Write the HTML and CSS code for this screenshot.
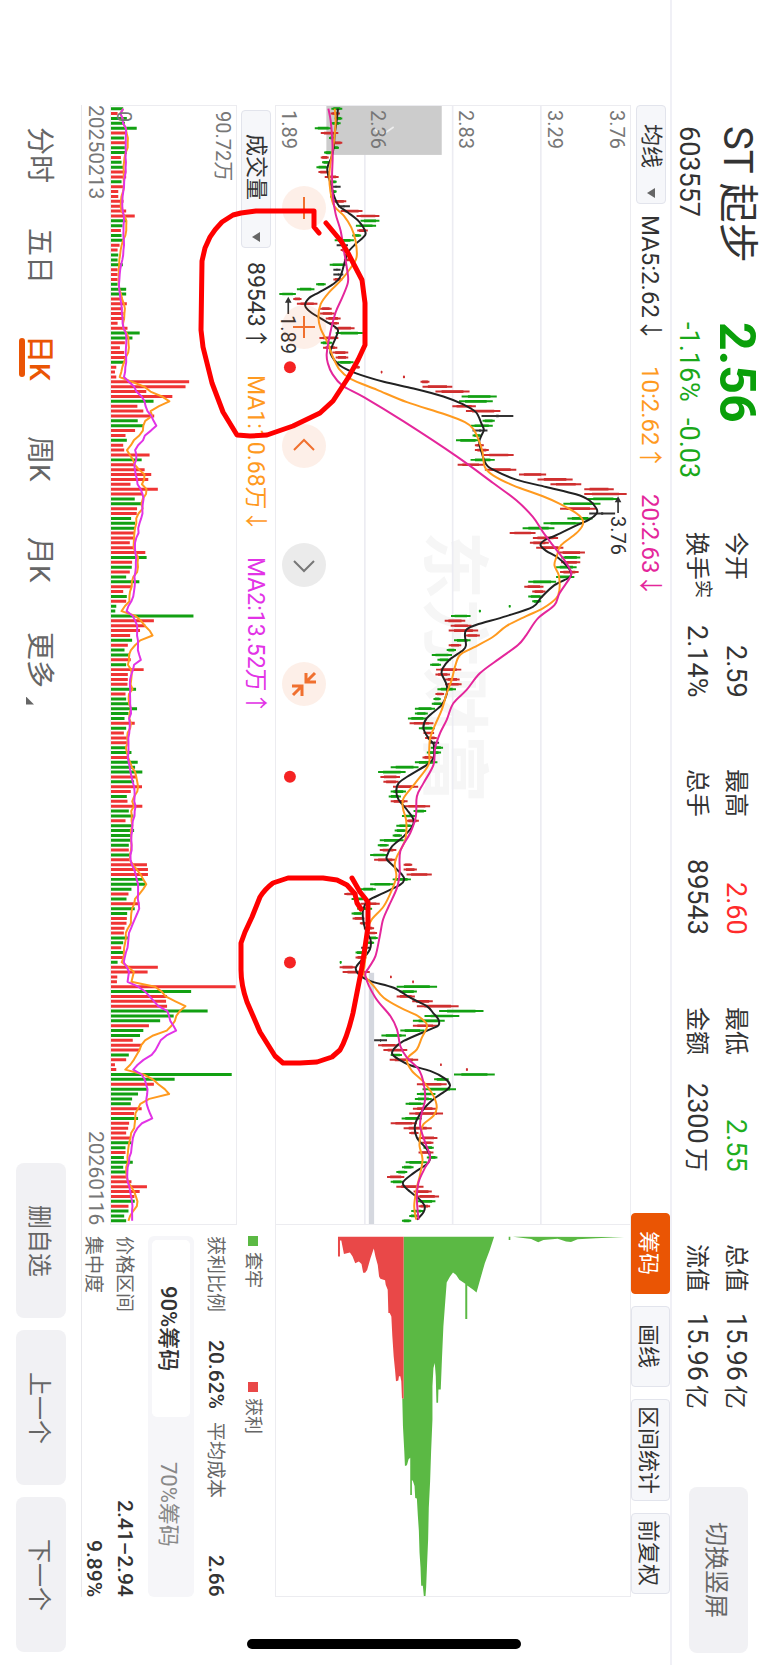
FILE: index.html
```html
<!DOCTYPE html>
<html lang="zh-CN">
<head>
<meta charset="utf-8">
<title>ST 起步 603557</title>
<link rel="stylesheet" href="styles.css">
</head>
<body>
<div class="app">
  <header class="quote">
    <div class="name-block">
      <h1 class="name">ST 起步</h1>
      <p class="code">603557</p>
    </div>
    <div class="price-block">
      <p class="price">2.56</p>
      <p class="change"><span>-1.16%</span><span>-0.03</span></p>
    </div>
    <dl class="stats">
      <div class="stat"><dt>今开</dt><dd>2.59</dd></div>
      <div class="stat"><dt>最高</dt><dd class="up">2.60</dd></div>
      <div class="stat"><dt>最低</dt><dd class="down">2.55</dd></div>
      <div class="stat"><dt>总值</dt><dd>15.96<span class="unit">亿</span></dd></div>
      <div class="stat"><dt>换手<sup>实</sup></dt><dd>2.14%</dd></div>
      <div class="stat"><dt>总手</dt><dd>89543</dd></div>
      <div class="stat"><dt>金额</dt><dd>2300<span class="unit">万</span></dd></div>
      <div class="stat"><dt>流值</dt><dd>15.96<span class="unit">亿</span></dd></div>
    </dl>
    <button class="soft-button rotate-button" type="button">切换竖屏</button>
  </header>

  <div class="toolbar">
    <div class="picker">
      <select aria-label="主图指标"><option>均线</option></select>
      <svg class="caret" viewBox="0 0 8 10"><path d="M8 0V10L0 5Z"/></svg>
    </div>
    <p class="readout">
      <span>MA5:2.62<i class="arrow">↓</i></span>
      <span class="ma-b">10:2.62<i class="arrow">↑</i></span>
      <span class="ma-c">20:2.63<i class="arrow">↓</i></span>
    </p>
    <div class="tools">
      <button class="tool active" type="button">筹码</button>
      <button class="tool" type="button">画线</button>
      <button class="tool wide" type="button">区间统计</button>
      <button class="tool" type="button">前复权</button>
    </div>
  </div>

  <main class="board">
    <section class="price-chart" aria-label="日K线">
      <span class="watermark">东方财富</span>
      <svg class="plot" viewBox="45 45 1068 3360" preserveAspectRatio="none">
        <path class="grid" d="M313 45V3405M578 45V3405M844 45V3405"/>
        <rect class="badge" x="197" y="45" width="348" height="147"/>
        <path class="badge-tick" d="M340 112L362 134L400 108"/>
        <rect class="gap-band" x="325" y="2650" width="16" height="755"/>
        <g id="candles"></g>
        <path id="ma5" class="line ma5"/>
        <path id="ma10" class="line ma10"/>
        <path id="ma20" class="line ma20"/>
        <path class="pointer" d="M1077 1268V1230M82 670V630"/>
        <path class="pointer-head" d="M1077 1218L1087 1236H1067ZM82 618L92 636H72Z"/>
        <g class="dots"><ellipse cx="87" cy="830" rx="18" ry="18"/><ellipse cx="87" cy="2061" rx="18" ry="18"/><ellipse cx="87" cy="2619" rx="18" ry="18"/></g>
      </svg>
      <div class="scale">
        <div><span>3.76</span><span>3.29</span></div>
        <div><span>2.83</span></div>
        <div><span>2.36</span></div>
        <div><span>1.89</span></div>
      </div>
      <span class="extreme high">3.76</span>
      <span class="extreme low">1.89</span>
      <div class="chart-controls">
        <button type="button" aria-label="缩小"><svg viewBox="0 0 44 44"><path d="M22 11V33"/></svg></button>
        <button type="button" aria-label="放大"><svg viewBox="0 0 44 44"><path d="M22 11V33M11 22H33"/></svg></button>
        <button type="button" aria-label="向左"><svg viewBox="0 0 44 44"><path d="M12 26L22 16L32 26"/></svg></button>
        <button class="muted" type="button" aria-label="向右"><svg viewBox="0 0 44 44"><path d="M12 18L22 28L32 18"/></svg></button>
        <button type="button" aria-label="收起"><svg viewBox="0 0 44 44"><path class="bold" d="M33 11L24 20M24 11V20H34M11 33L20 24M10 24H20V34"/></svg></button>
      </div>
    </section>

    <section class="chip-chart" aria-label="筹码分布">
      <svg class="plot" viewBox="-135 45 1068 1116" preserveAspectRatio="none">
        <path class="trapped" d="M250 80L523 80L510 120L495 160L482 205L470 248L460 240L442 227V328H436V222L418 210L408 195L399 188L390 200L380 218L376 270L370 350L366 440L362 540H355L354 580H349L347 500L344 460L340 475L337 530V630L333 725L330 815L326 895L324 990L321 1060L318 1135L316 1161H311L308 1130H303L301 1075L298 1030L296 965L293 920L290 868L285 866L283 830L278 815L275 812V857H270V745L265 750L260 768L254 770L252 725L248 650L246 567H250ZM567 80H572V90H567ZM580 80L635 87L656 97L672 90L715 86L740 95L755 96L775 88L830 85L915 81Z"/>
        <path class="profit" d="M52 80H250V567H245L243 515L240 500H236L234 513L227 515L224 480L220 440L216 380L213 320L208 310H204L202 240L196 225L194 211L180 207L176 200L172 165L165 140L160 116L150 145L140 180L134 189H128L123 162L115 155L104 160L96 140L88 128L70 132L62 92H58V140H52Z"/>
      </svg>
    </section>

    <section class="volume" aria-label="成交量">
      <div class="volume-head">
        <div class="picker">
          <select aria-label="副图指标"><option>成交量</option></select>
          <svg class="caret" viewBox="0 0 8 10"><path d="M8 0V10L0 5Z"/></svg>
        </div>
        <p class="readout">
          <span>89543<i class="arrow">↑</i></span>
          <span class="ma-b">MA1:10.68万<i class="arrow">↓</i></span>
          <span class="ma-d">MA2:13.52万<i class="arrow">↑</i></span>
        </p>
      </div>
      <div class="volume-chart">
        <svg class="plot" viewBox="330 45 379 3360" preserveAspectRatio="none">
          <g id="bars"></g>
          <path id="vol5" class="line ma10"/>
          <path id="vol10" class="line vol10"/>
        </svg>
        <div class="volume-scale"><span>90.72万</span><span>0</span></div>
      </div>
      <div class="dates"><time>20250213</time><time>20260116</time></div>
    </section>

    <section class="chips" aria-label="筹码统计">
      <div class="legend">
        <span class="key trapped-key">套牢</span>
        <span class="key profit-key">获利</span>
      </div>
      <div class="chip-row four"><span>获利比例</span><b>20.62%</b><span>平均成本</span><b>2.66</b></div>
      <div class="segments">
        <button class="selected" type="button">90%筹码</button>
        <button type="button">70%筹码</button>
      </div>
      <div class="chip-row"><span>价格区间</span><b>2.41–2.94</b></div>
      <div class="chip-row"><span>集中度</span><b>9.89%</b></div>
    </section>
  </main>

  <footer class="bottom">
    <nav class="tabs">
      <a href="#">分时</a>
      <a href="#">五日</a>
      <a href="#" class="current">日K</a>
      <a href="#">周K</a>
      <a href="#">月K</a>
      <a href="#" class="more">更多</a>
    </nav>
    <div class="actions">
      <button class="soft-button" type="button">删自选</button>
      <button class="soft-button" type="button">上一个</button>
      <button class="soft-button" type="button">下一个</button>
    </div>
  </footer>

  <svg class="markup" viewBox="0 0 768 1665" preserveAspectRatio="none" aria-hidden="true">
    <path d="M319 233L314 227V211H256L241 213L233 215L222 222Q215 229 210 237L205 248L202 261L201 330L203 347L212 383L223 412L237 435L250 436L267 435L293 426L320 413L333 401L348 378L358 360L365 345V303L362 280L348 253L341 241L326 223"/>
    <path d="M352 878L360 892L368 902V927L362 967L353 1013Q347 1038 340 1050L332 1057L317 1062L300 1063H283L275 1056L260 1032L247 1002Q241 985 241 970V943L245 932L252 917L260 897Q265 889 273 883L288 878H323L337 880L347 885L355 894L357 903L361 909"/>
  </svg>
  <div class="home-bar"></div>
</div>
<script src="charts.js"></script>
</body>
</html>
```
FILE: styles.css
```css
* { box-sizing: border-box; }

html, body { height: 100%; }

body {
  margin: 0;
  background: #fff;
  color: #333;
  font-family: Roboto, "Noto Sans CJK SC", sans-serif;
}

h1, p, dl, dd, dt { margin: 0; font-weight: 400; }

button, select {
  margin: 0;
  border: 0;
  font: inherit;
  color: inherit;
  writing-mode: inherit;
  text-orientation: inherit;
}

.app {
  position: relative;
  display: flex;
  flex-direction: column;
  width: 100%;
  height: 100%;
  writing-mode: vertical-rl;
  text-orientation: sideways;
  white-space: nowrap;
}

/* Quote header */
.quote {
  display: flex;
  block-size: 98px;
  padding-block-start: 3px;
  padding-inline: 126px 12px;
  border-block-end: 2px solid #f0f0f6;
}

.name-block { flex: 0 0 196px; }
.price-block { flex: 0 0 210px; }
.name { font-size: 40px; line-height: 56px; }
.code { font-size: 27px; line-height: 40px; }
.price { font-size: 50px; font-weight: 700; line-height: 56px; color: #0a9f0a; }
.change { display: flex; gap: 16px; font-size: 27px; line-height: 40px; color: #1aa81a; }

.stats {
  flex: 1;
  display: grid;
  grid-template-columns: repeat(4, 1fr);
  grid-template-rows: 39px 39px;
  column-gap: 72px;
  padding-block-start: 10px;
  margin-inline-end: 78px;
  line-height: 39px;
}

.stat { display: flex; justify-content: space-between; }
.stat dt { font-size: 24px; }
.stat dd { font-size: 27px; }
.stat .unit { font-size: 24px; margin-inline-start: 4px; }
.stat sup { font-size: 18px; line-height: 1; vertical-align: 8px; }
.up { color: #ff2b2b; }
.down { color: #1fae1f; }

.soft-button {
  background: #f1f1f4;
  border-radius: 8px;
  padding: 0;
  color: #666;
  font-size: 24px;
}

.rotate-button { flex: 0 0 166px; block-size: 59px; margin-block-start: 17px; }

/* Indicator toolbar */
.toolbar {
  display: flex;
  align-items: center;
  block-size: 39px;
  padding-inline: 105px 71px;
}

.picker { position: relative; }

.picker select {
  appearance: none;
  block-size: 30px;
  padding-block: 0;
  padding-inline: 18px 34px;
  border: 1px solid #e2e4ec;
  border-radius: 4px;
  background: #f6f7fa;
  font-size: 22px;
  line-height: 28px;
}

.caret {
  position: absolute;
  inset-inline-end: 6px;
  inset-block-start: 11px;
  width: 8px;
  height: 10px;
  fill: #666;
}

.readout {
  display: flex;
  gap: 24px;
  margin-inline-start: 11px;
  font-size: 24px;
  line-height: 38px;
}

.arrow { font-family: "Noto Sans CJK SC", sans-serif; font-style: normal; }
.ma-b { color: #ff9a1f; }
.ma-c { color: #e4269b; }
.ma-d { color: #e233e6; }

.tools { display: flex; gap: 12px; block-size: 100%; margin-inline-start: auto; }

.tool {
  inline-size: 81px;
  padding: 0;
  border: 1px solid #e2e4ec;
  border-radius: 4px;
  background: #f6f7fa;
  font-size: 22px;
}

.tool.wide { inline-size: 102px; }
.tool.active { background: #ea5504; border-color: #ea5504; color: #fff; }

/* Charts */
.board {
  flex: 1;
  min-block-size: 0;
  display: grid;
  grid-template-columns: 1120fr 372fr;
  grid-template-rows: minmax(0, 356fr) minmax(0, 193fr);
  margin-inline: 105px 68px;
}

.plot { position: absolute; inset: 0; width: 100%; height: 100%; }

.price-chart, .chip-chart { position: relative; border: 1px solid #ececf0; }
.chip-chart { border-inline-start: 0; }

.grid { stroke: #ececf2; stroke-width: 5; }
.badge { fill: #ccc; }
.badge-tick { fill: none; stroke: #eee; stroke-width: 5; }
.gap-band { fill: #d5d8df; }
.line { fill: none; stroke-width: 6; stroke-linejoin: round; }
.ma5 { stroke: #222; }
.ma10 { stroke: #ff9a1f; }
.ma20 { stroke: #e4269b; }
.vol10 { stroke: #e233e6; }
.pointer { stroke: #333; stroke-width: 5; }
.pointer-head { fill: #333; }
.dots { fill: #f52323; }
.rise { stroke: #cf2f2f; }
.fall { stroke: #12a012; }
.flat { stroke: #333; }
#bars .rise { stroke: #f03434; }
.wick { stroke-width: 6; }
.body { stroke-width: 8; }
.volume-bars { stroke-width: 9; }
.trapped { fill: #5bb944; }
.profit { fill: #e94848; }

.watermark {
  position: absolute;
  inset-inline-start: 38%;
  inset-block-start: 143px;
  font-size: 68px;
  font-weight: 700;
  line-height: 68px;
  color: #f6f6f6;
}

.scale {
  position: absolute;
  inset: 0;
  display: grid;
  grid-template-rows: repeat(4, 1fr);
  padding-inline-start: 4px;
  font-size: 20px;
  line-height: 26px;
  color: #777;
}

.scale div { display: flex; flex-direction: column; justify-content: space-between; }
.scale div + div { justify-content: flex-end; }

.extreme { position: absolute; font-size: 20px; line-height: 24px; }
.extreme.high { inset-block-start: 0; inset-inline-start: 410px; }
.extreme.low { inset-block-end: 0; inset-inline-start: 209px; }

.chart-controls {
  position: absolute;
  inset-block-end: 6px;
  inset-inline-start: 80px;
  display: flex;
  gap: 75px;
}

.chart-controls button {
  inline-size: 44px;
  block-size: 44px;
  padding: 0;
  border-radius: 50%;
  background: rgba(240, 100, 30, 0.1);
}

.chart-controls .muted { background: #ebebeb; }
.chart-controls svg { display: block; width: 44px; height: 44px; }
.chart-controls path { fill: none; stroke: #f0702f; stroke-width: 2; }
.chart-controls .bold { stroke-width: 3; }
.chart-controls .muted path { stroke: #777; }

.volume { display: flex; flex-direction: column; min-inline-size: 0; }
.volume-head { display: flex; align-items: center; block-size: 38px; padding-inline-start: 5px; }
.volume-head .picker select { padding-inline: 23px 46px; }
.volume-head .readout { gap: 25px; margin-inline-start: 14px; font-size: 23px; }
.volume-chart { position: relative; flex: 1; border: 1px solid #ececf0; }

.volume-scale {
  position: absolute;
  inset: 0;
  display: flex;
  flex-direction: column;
  justify-content: space-between;
  padding-inline-start: 5px;
  font-size: 20px;
  line-height: 26px;
  color: #777;
}

.dates {
  display: flex;
  justify-content: space-between;
  font-size: 21px;
  line-height: 28px;
  color: #777;
}

/* Chip statistics */
.chips { padding-inline-start: 11px; padding-block-start: 6px; color: #666; font-size: 19px; }
.legend { display: grid; grid-template-columns: 146px 1fr; font-size: 18px; line-height: 32px; }
.key { display: flex; align-items: center; gap: 6px; }
.key::before { content: ""; width: 10px; height: 10px; background: #5bb944; }
.profit-key::before { background: #e94848; }

.chip-row { display: flex; justify-content: space-between; line-height: 31px; }
.chip-row b { font-size: 21px; font-weight: 500; color: #333; }
.four { display: grid; grid-template-columns: 104px 82px 76px 1fr; margin-block-start: 6px; }
.four b:last-child { text-align: end; }

.segments {
  display: grid;
  grid-template-columns: 1fr 1fr;
  margin-block: 6px 8px;
  block-size: 46px;
  padding: 4px;
  border-radius: 6px;
  background: #f6f6f9;
}

.segments button { padding: 0; border-radius: 5px; background: none; font-size: 22px; color: #888; }
.segments .selected { background: #fff; color: #333; font-weight: 500; }

/* Period tabs and actions */
.bottom {
  position: relative;
  display: flex;
  justify-content: space-between;
  align-items: center;
  block-size: 82px;
  padding-inline: 105px 13px;
}

.bottom::before {
  content: "";
  position: absolute;
  inset-block-start: 0;
  inset-inline: 105px 68px;
  border-block-start: 1px solid #e8e8ec;
}

.tabs {
  display: grid;
  grid-template-columns: repeat(6, 101px);
  margin-block-start: 4px;
  font-size: 28px;
  line-height: 44px;
}

.tabs a { position: relative; justify-self: center; color: #666; text-decoration: none; }
.tabs .current { color: #ea5504; font-weight: 500; }

.tabs .current::after {
  content: "";
  position: absolute;
  inset-inline: 3px;
  inset-block-end: 2px;
  block-size: 6px;
  border-radius: 3px;
  background: #ea5504;
}

.tabs .more::after {
  content: "";
  position: absolute;
  inset-inline-end: -16px;
  inset-block-end: 9px;
  width: 8px;
  height: 8px;
  background: #666;
  clip-path: polygon(0 0, 100% 100%, 0 100%);
}

.actions { display: flex; gap: 12px; }
.actions .soft-button { inline-size: 155px; block-size: 50px; }

/* Overlays */
.markup { position: absolute; inset: 0; width: 100%; height: 100%; pointer-events: none; }
.markup path { fill: none; stroke: #f00; stroke-width: 5; stroke-linecap: round; stroke-linejoin: round; }

.home-bar {
  position: absolute;
  bottom: 16px;
  left: 50%;
  width: 274px;
  height: 10px;
  margin-left: -137px;
  border-radius: 5px;
  background: #000;
}
```
FILE: charts.js
```js
const START = 53;
const STEP = 14.66;
const KIND = { r: "rise", g: "fall", k: "flat" };

/* One entry per trading day: direction, low-high. */
const candles = `g212-245 r210-238 g222-245 g210-240 g162-213 r180-233 g205-220 r218-245 g215-235 g190-214
r180-204 g184-207 g167-203 r173-204 r192-234 g210-228 k212-240 g212-228 g208-222 r215-257
k232-268 r240-306 r288-357 g300-357 g286-347 r290-322 g275-302 g222-280 k228-262 r240-262
g250-268 r250-268 g207-256 k218-240 k218-248 r218-245 g166-195 g108-161 g55-105 r97-122
r108-170 r178-213 r178-222 r195-240 r205-235 r222-282 g225-307 r176-233 g180-215 r187-230
r215-263 r225-263 g230-279 r285-298 r361-366 r428-434 r481-508 r487-577 r526-629 g605-711
g597-699 r577-648 r618-722 k665-761 g668-705 g632-699 k638-683 g638-665 g588-660 r645-672
r645-687 r672-762 g632-705 r593-672 r675-770 r778-860 r834-940 r873-966 r975-1064 r975-1103
g985-1080 g912-1024 r902-1012 k990-1068 g924-1000 g852-970 g789-885 r750-828 r820-896 r811-868
r830-912 r895-977 g905-963 r905-963 g890-952 r902-958 g890-945 g806-890 r794-852 r818-858
g806-850 g818-845 g747-753 g657-663 g573-632 r554-616 r572-635 r566-655 r615-660 g582-632
r566-604 g560-588 g515-576 g532-572 g510-543 r528-604 r526-570 r555-599 r555-605 g532-588
r526-552 g520-542 g515-548 g464-525 g464-503 g443-500 r448-520 g476-524 r490-522 r495-530
k508-537 g512-549 g500-543 r487-520 g464-532 g391-475 g353-436 r360-419 r369-415 r398-474
g391-437 g385-422 r391-442 r430-510 g460-498 g425-468 r437-476 g408-460 g403-440 g397-425
g358-430 g352-385 r358-408 g329-382 r341-408 r430-456 r430-470 r439-515 g397-452 g329-402
g300-346 r251-290 g273-315 r300-358 g290-335 g273-308 r276-312 r298-320 r310-341 r320-350
g325-352 g320-341 k302-330 g285-310 r285-318 g237-243 r237-285 r246-328 r389-394 r456-461
g409-531 g418-470 r409-464 r456-518 r470-596 g537-671 g493-598 g458-554 r458-532 g420-493
g363-437 k341-380 r353-415 r369-441 g391-425 r388-474 r540-545 r618-624 g582-705 g522-566
r470-560 g487-588 g470-526 g464-515 g436-493 r458-530 r447-549 g424-485 r391-470 r430-515
r447-475 r475-532 r485-520 g490-521 r475-520 g500-532 g436-500 g425-460 g408-441 r380-432
g391-430 r408-490 r460-515 r465-537 g470-526 r475-510 g453-490 g447-475 g425-453`
  .split(/\s+/)
  .map(s => { const [lo, hi] = s.slice(1).split("-").map(Number); return { kind: KIND[s[0]], lo, hi }; });

const volumes = `g367 r350 g378 g372 g408 r378 g370 r375 g372 g378 r360 g362 g368 r376 r376 g362 r366 r352 r352 r368
r360 r376 r402 g378 g365 r360 g362 g368 r356 r350 g352 g350 g366 r350 r350 r350 g350 g376 g376 r366
r378 r365 r368 r372 r350 r380 g417 g395 r372 r357 r370 r378 g370 r346 r342 r346 r567 r556 r437 r516
g459 r410 r428 r461 g411 g430 r403 r374 g378 r367 r370 r447 g423 r403 r432 r452 r443 r389 r472 r425
g402 g423 r409 r408 g391 g403 g403 r400 r402 r387 r400 r434 g438 r394 g393 r387 g376 g416 r392 r367
g378 r376 g346 g343 g580 r460 r434 r418 r388 g394 r381 g371 g388 r390 g376 r429 r381 r381 r380 g406
r374 g376 g388 g409 g383 g371 r402 g376 r369 r378 r378 g375 g392 r385 g411 g403 g425 r409 g400 r424
r390 g378 r380 r425 g384 g398 r374 g394 g400 g392 g392 g384 r384 g388 r388 r439 r442 r442 g428 g434
g392 r383 g377 r416 g402 g379 r378 r377 r371 r369 g381 g367 r361 g367 r366 g350 r472 r441 r349 r348
r708 g573 r500 r497 r500 g623 g520 g479 r445 g428 g418 r396 r422 r418 g384 r376 r342 r346 g696 g523
r460 g440 g412 g394 g390 r423 r400 g412 r385 r382 r376 r390 g392 g374 r374 g369 g396 g367 g376 r378
r392 r439 r417 r401 g402 r383 g383 g370 g376`
  .split(/\s+/)
  .map(s => ({ kind: KIND[s[0]], end: Number(s.slice(1)) }));

const ma5 = [232,53,228,90,222,130,219,170,212,200,200,230,203,255,212,285,220,315,235,345,262,365,295,392,315,425,308,440,285,460,262,485,252,515,238,560,215,582,175,605,145,622,133,645,150,665,195,692,230,715,228,735,215,765,210,790,238,825,285,848,370,874,460,894,550,918,610,942,648,965,665,1000,672,1018,665,1035,658,1055,665,1085,678,1120,700,1138,770,1168,860,1190,950,1212,990,1230,1012,1255,1012,1270,990,1288,950,1306,890,1335,855,1350,843,1365,860,1382,895,1402,925,1430,935,1448,930,1462,885,1485,845,1522,820,1550,740,1578,650,1604,620,1618,615,1635,618,1665,610,1680,570,1708,548,1735,545,1752,560,1785,560,1812,545,1845,500,1885,490,1915,505,1945,520,1962,522,1980,520,2005,500,2025,450,2055,415,2080,408,2105,415,2130,440,2160,460,2190,455,2212,430,2240,395,2270,380,2298,380,2310,400,2330,425,2355,432,2370,420,2385,370,2410,325,2432,308,2460,308,2490,315,2520,330,2550,328,2580,305,2610,286,2635,295,2655,330,2675,400,2695,450,2725,500,2750,520,2772,535,2790,535,2808,510,2820,430,2855,400,2880,396,2895,415,2910,450,2928,510,2945,555,2968,570,2988,560,3002,520,3030,490,3060,465,3105,470,3145,500,3180,510,3205,500,3225,460,3252,428,3280,440,3300,475,3328,493,3350,490,3370,470,3392];
const ma10 = [222,53,225,90,220,150,212,200,206,250,209,300,220,345,250,375,272,410,285,450,288,500,268,535,240,570,205,605,180,640,173,680,180,715,200,755,215,795,235,835,270,865,350,898,440,935,550,970,615,995,640,1015,655,1045,668,1085,675,1130,700,1155,760,1185,850,1218,900,1240,945,1265,968,1285,970,1305,950,1330,905,1365,893,1395,885,1425,898,1455,900,1500,890,1525,850,1555,800,1578,740,1608,700,1640,640,1673,600,1695,585,1730,575,1770,560,1810,545,1860,525,1905,510,1945,507,1985,505,2025,465,2080,430,2125,428,2155,438,2195,435,2250,410,2300,403,2325,408,2360,395,2400,370,2450,335,2488,320,2520,318,2570,312,2630,310,2655,340,2690,370,2725,420,2755,470,2778,497,2800,500,2815,485,2845,470,2880,440,2910,455,2945,490,2978,520,3020,530,3055,520,3080,490,3105,482,3130,478,3170,487,3210,480,3255,470,3295,462,3350,468,3392];
const ma20 = [203,53,210,90,215,150,216,200,214,260,217,320,225,370,240,420,250,480,260,540,262,575,245,620,225,665,208,730,198,790,202,820,215,850,245,885,310,920,430,993,590,1098,700,1178,770,1230,820,1280,850,1325,880,1365,915,1410,935,1445,930,1465,900,1510,885,1545,835,1585,800,1635,775,1665,720,1705,660,1750,620,1800,580,1840,560,1890,540,1930,525,1975,520,2025,490,2080,470,2120,467,2180,450,2230,420,2285,418,2350,410,2395,385,2450,368,2490,358,2540,345,2600,325,2635,315,2660,345,2725,390,2780,410,2820,420,2870,440,2905,475,2940,490,2980,495,3030,485,3070,480,3110,495,3160,510,3205,495,3235,475,3280,470,3330,475,3392];

const yAt = i => START + STEP * i;

function smooth(flat) {
  const p = [];
  for (let i = 0; i < flat.length; i += 2) p.push([flat[i], flat[i + 1]]);
  let d = `M${p[0]}`;
  for (let i = 0; i < p.length - 1; i++) {
    const a = p[i - 1] || p[i], b = p[i], c = p[i + 1], e = p[i + 2] || c;
    d += `C${b[0] + (c[0] - a[0]) / 6} ${b[1] + (c[1] - a[1]) / 6} ${c[0] - (e[0] - b[0]) / 6} ${c[1] - (e[1] - b[1]) / 6} ${c[0]} ${c[1]}`;
  }
  return d;
}

function average(days) {
  return "M" + volumes.map((v, i) => {
    const part = volumes.slice(Math.max(0, i - days + 1), i + 1);
    return `${part.reduce((sum, x) => sum + x.end, 0) / part.length} ${yAt(i)}`;
  }).join("L");
}

function draw(group, kind, cls, d) {
  const path = document.createElementNS("http://www.w3.org/2000/svg", "path");
  path.setAttribute("class", `${kind} ${cls}`);
  path.setAttribute("d", d);
  document.getElementById(group).append(path);
}

for (const kind of Object.values(KIND)) {
  let wick = "", body = "", bars = "";
  candles.forEach((c, i) => {
    if (c.kind !== kind) return;
    const inset = (c.hi - c.lo) * (kind === "flat" ? 0.46 : 0.18);
    wick += `M${c.lo} ${yAt(i)}H${c.hi}`;
    body += `M${c.lo + inset} ${yAt(i)}H${c.hi - inset}`;
  });
  volumes.forEach((v, i) => { if (v.kind === kind) bars += `M330 ${yAt(i)}H${v.end}`; });
  draw("candles", kind, "wick", wick);
  draw("candles", kind, "body", body);
  draw("bars", kind, "volume-bars", bars);
}

document.getElementById("ma5").setAttribute("d", smooth(ma5));
document.getElementById("ma10").setAttribute("d", smooth(ma10));
document.getElementById("ma20").setAttribute("d", smooth(ma20));
document.getElementById("vol5").setAttribute("d", average(5));
document.getElementById("vol10").setAttribute("d", average(10));
```
